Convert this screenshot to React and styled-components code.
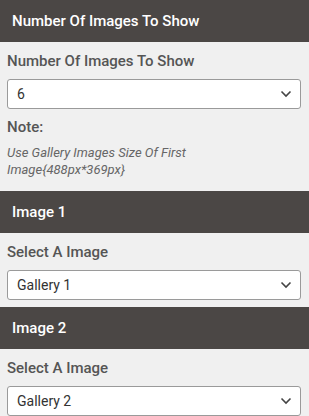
import React from "react";
import styled, { createGlobalStyle } from "styled-components";

const GlobalStyle = createGlobalStyle`
  html, body {
    margin: 0;
    padding: 0;
    background: #f0f0f0;
    font-family: Roboto, "Liberation Sans", sans-serif;
  }
`;

function Chevron() {
  return (
    <svg width="12" height="8" viewBox="0 0 12 8">
      <path d="M1.5 1.5 L6 6 L10.5 1.5" fill="none" stroke="#444" strokeWidth="1.6" />
    </svg>
  );
}

function SelectBox({ value }) {
  return (
    <SelectWrap>
      <SelectValue>{value}</SelectValue>
      <Chevron />
    </SelectWrap>
  );
}

export default function App() {
  return (
    <>
      <GlobalStyle />
      <Panel>
        <Header>Number Of Images To Show</Header>
        <Body $pb={13}>
          <Label>Number Of Images To Show</Label>
          <SelectBox value="6" />
          <NoteTitle>Note:</NoteTitle>
          <NoteText>
            Use Gallery Images Size Of First
            <br />
            Image{"{488px*369px}"}
          </NoteText>
        </Body>
        <Header>Image 1</Header>
        <Body $pb={7}>
          <Label>Select A Image</Label>
          <SelectBox value="Gallery 1" />
        </Body>
        <Header>Image 2</Header>
        <Body $pb={7}>
          <Label>Select A Image</Label>
          <SelectBox value="Gallery 2" />
        </Body>
      </Panel>
    </>
  );
}

const Panel = styled.div`
  width: 309px;
  display: flex;
  flex-direction: column;
`;

const Header = styled.div`
  height: 42px;
  display: flex;
  align-items: center;
  padding: 0 12px;
  background-color: #4b4745;
  color: #ffffff;
  font-size: 15px;
  font-weight: 500;
`;

const Body = styled.div`
  padding: 9px 8px ${(p) => p.$pb}px 7px;
  display: flex;
  flex-direction: column;
`;

const Label = styled.div`
  font-size: 15px;
  line-height: 20px;
  font-weight: 500;
  color: #555555;
`;

const SelectWrap = styled.div`
  margin-top: 8px;
  height: 30px;
  box-sizing: border-box;
  border: 1px solid #9a9a9a;
  border-radius: 3px;
  background: #ffffff;
  display: flex;
  align-items: center;
  justify-content: space-between;
  padding: 0 8px 0 9px;
`;

const SelectValue = styled.span`
  font-size: 14px;
  color: #333333;
`;

const NoteTitle = styled.div`
  margin-top: 8px;
  font-size: 15px;
  line-height: 20px;
  font-weight: 500;
  color: #555555;
`;

const NoteText = styled.div`
  margin-top: 7px;
  font-size: 13px;
  line-height: 17px;
  font-style: italic;
  color: #666666;
`;
